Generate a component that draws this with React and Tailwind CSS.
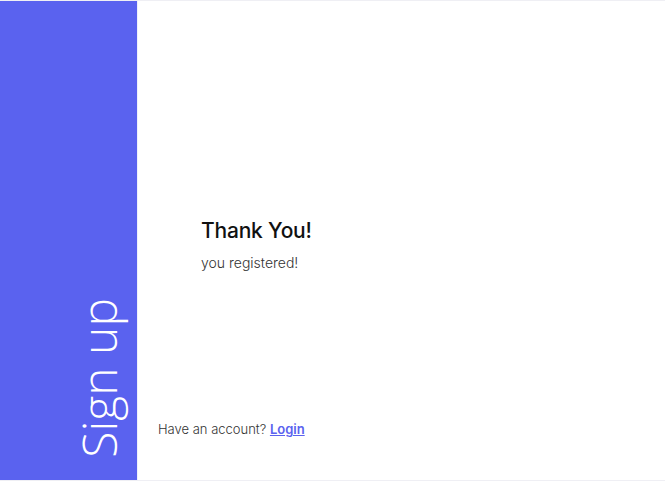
export default function App(){
  return (
    <div className="w-[665px] h-[481px] bg-white font-['Inter',sans-serif]">
      <div className="h-[481px] flex border-t border-b border-[#efeff4]">
        <aside className="w-[137px] shrink-0 bg-[#5a62ef] relative">
          <div className="absolute left-[75px] bottom-[22px]">
            <h1 className="text-white text-[48px] leading-none font-light font-['Open_Sans',sans-serif] [writing-mode:vertical-rl] rotate-180 whitespace-nowrap">
              Sign up
            </h1>
          </div>
        </aside>
        <main className="flex-1 flex flex-col border-l border-[#eef0fb]">
          <div className="flex-1 pl-[63px] pt-[219px]">
            <h2 className="text-[21px] leading-none font-medium text-[#111] tracking-[-0.2px]">Thank You!</h2>
            <p className="mt-[15px] text-[14px] leading-none font-light text-[#333]">you registered!</p>
          </div>
          <div className="pl-[20px] pb-[44px] text-[13px] leading-none text-[#333] font-light">
            Have an account? <a href="#" className="text-[#5a62ef] font-semibold underline">Login</a>
          </div>
        </main>
      </div>
    </div>
  )
}
